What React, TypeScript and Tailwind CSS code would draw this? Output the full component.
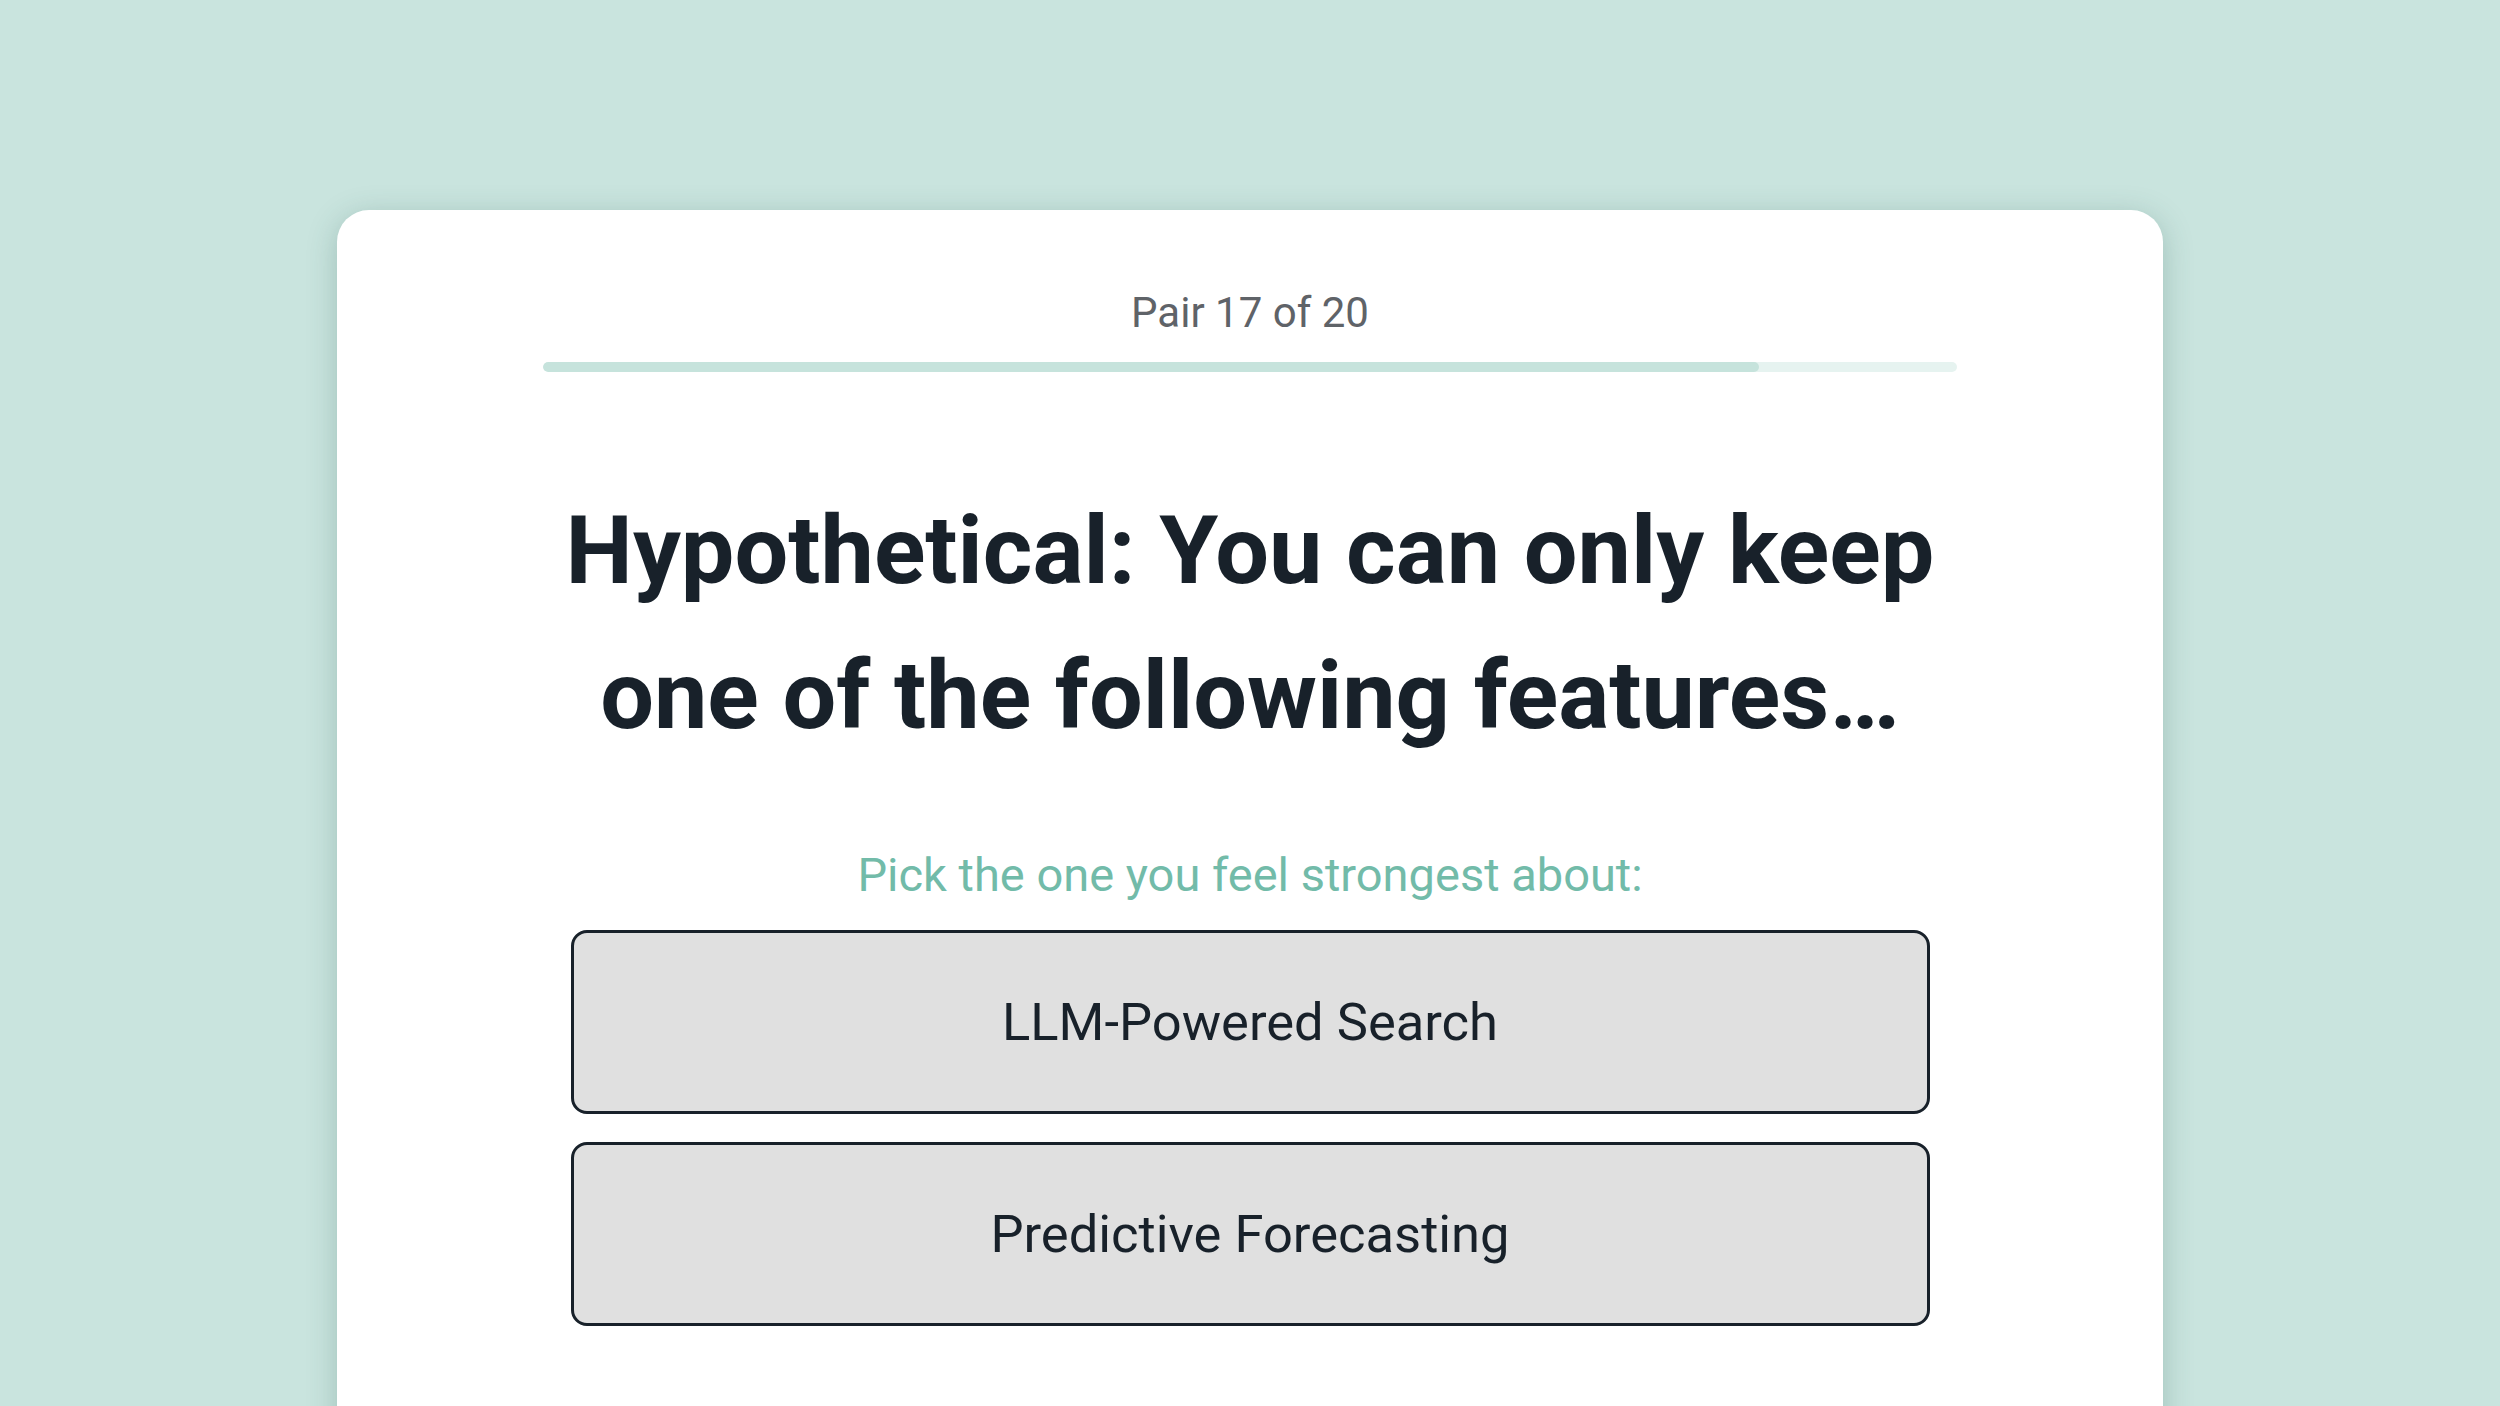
export default function App() {
  const current = 17;
  const total = 20;
  const options = ['LLM-Powered Search', 'Predictive Forecasting'];

  return (
    <div className="min-h-screen h-[1406px] overflow-hidden bg-[#c9e4de] font-['Roboto',sans-serif]">
      <div className="mx-auto mt-[210px] w-[1826px] h-[1300px] rounded-[32px] bg-white shadow-[0_6px_30px_rgba(40,90,80,0.26)] pt-[82px] flex flex-col items-center">
        {/* Progress */}
        <div className="text-[42px] leading-none text-[#5f6368]">
          Pair {current} of {total}
        </div>
        <div className="mt-[28px] w-[1414px] h-[10px] rounded-full bg-[#e6f3f0] overflow-hidden">
          <div className="h-full rounded-full bg-[#c6e3dc]" style={{ width: '86%' }} />
        </div>

        {/* Question */}
        <h1 className="mt-[106px] w-[1400px] text-center text-[95.3px] leading-[145px] font-bold text-[#18212a]">
          Hypothetical: You can only keep one of the following features…
        </h1>

        <p className="mt-[83px] text-[47px] leading-none text-[#72bba9]">
          Pick the one you feel strongest about:
        </p>

        {/* Options */}
        <div className="mt-[32px] flex flex-col gap-[28px]">
          {options.map((o) => (
            <button
              key={o}
              className="w-[1359px] h-[184px] rounded-[16px] border-[3px] border-[#18212a] bg-[#e0e0e0] text-[52.5px] text-[#18212a] flex items-center justify-center"
            >
              {o}
            </button>
          ))}
        </div>
      </div>
    </div>
  );
}
